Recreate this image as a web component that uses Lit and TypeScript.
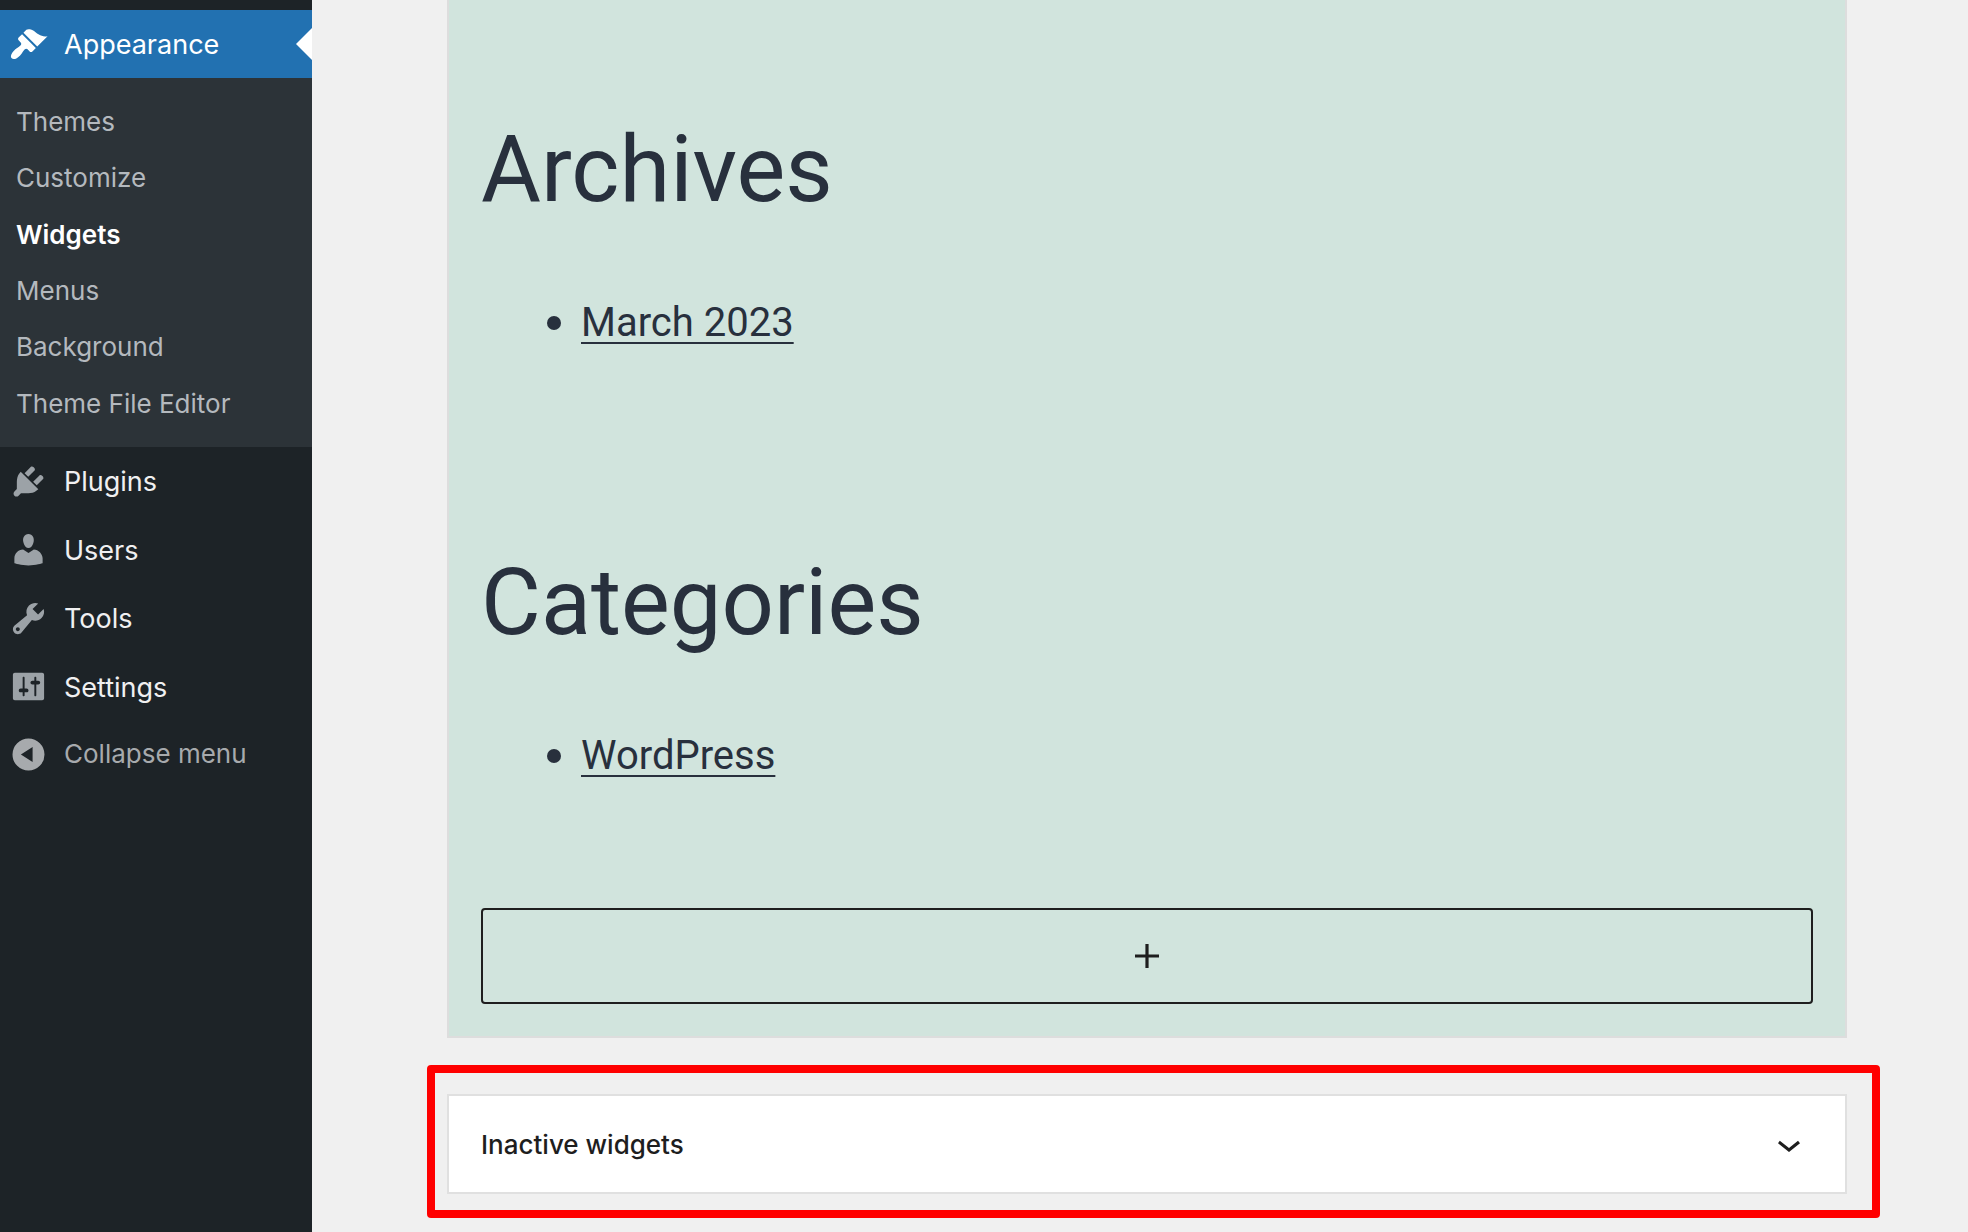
import { LitElement, html, css, svg } from "lit";
import { customElement, property, state } from "lit/decorators.js";
import { classMap } from "lit/directives/class-map.js";

const ICONS = {
  appearance: svg`<path d="M14.48 11.06L7.41 3.99l1.5-1.5c.5-.56 2.3-.47 3.51.32 1.21.8 1.43 1.28 2.91 2.1 1.18.64 2.45 1.26 4.45.85zm-.71.71L6.7 4.7 4.93 6.47c-.39.39-.39 1.02 0 1.41l1.06 1.06c.39.39.39 1.03 0 1.42-.6.6-1.43 1.11-2.21 1.69-.35.26-.7.53-1.01.84C1.43 14.23.4 16.08 1.4 17.07c.99 1 2.84-.03 4.18-1.36.31-.31.58-.66.85-1.02.57-.78 1.08-1.61 1.69-2.21.39-.39 1.02-.39 1.41 0l1.06 1.06c.39.39 1.02.39 1.41 0z"/>`,
  plugins: svg`<path d="M13.11 4.36L9.87 7.6 8 5.73l3.24-3.24c.35-.34 1.05-.2 1.56.32.52.51.66 1.21.31 1.55zm-8 1.77l.91-1.12 9.01 9.01-1.19.84c-.71.71-2.63 1.16-3.82 1.16H6.14L4.9 17.26c-.59.59-1.54.59-2.12 0-.59-.58-.59-1.53 0-2.12l1.24-1.24v-3.88c0-1.13.4-3.19 1.09-3.89zm7.26 3.97l3.24-3.24c.34-.35 1.04-.21 1.55.31.52.51.66 1.21.31 1.55l-3.24 3.25z"/>`,
  users: svg`<path d="M10 9.25c-2.27 0-2.73-3.44-2.73-3.44C7 4.02 7.82 2 9.97 2c2.16 0 2.98 2.02 2.71 3.81 0 0-.41 3.44-2.68 3.44zm0 2.57L12.72 10c2.39 0 4.52 2.33 4.52 4.53v2.49s-3.65 1.13-7.24 1.13c-3.65 0-7.24-1.13-7.24-1.13v-2.49c0-2.25 1.94-4.48 4.47-4.48z"/>`,
  tools: svg`<path d="M16.68 9.77c-1.34 1.34-3.3 1.67-4.95.99l-5.41 6.52c-.99.99-2.59.99-3.58 0s-.99-2.59 0-3.57l6.52-5.42c-.68-1.65-.35-3.61.99-4.95 1.28-1.28 3.12-1.62 4.72-1.06l-2.89 2.89 2.82 2.82 2.86-2.87c.53 1.58.18 3.39-1.08 4.65zM3.81 16.21c.4.39 1.04.39 1.43 0 .4-.4.4-1.04 0-1.43-.39-.4-1.03-.4-1.43 0-.39.39-.39 1.03 0 1.43z"/>`,
  settings: svg`<path d="M18 16V4c0-.55-.45-1-1-1H3c-.55 0-1 .45-1 1v12c0 .55.45 1 1 1h14c.55 0 1-.45 1-1zM8 11h1c.55 0 1 .45 1 1s-.45 1-1 1H8v1.5c0 .28-.22.5-.5.5s-.5-.22-.5-.5V13H6c-.55 0-1-.45-1-1s.45-1 1-1h1V5.5c0-.28.22-.5.5-.5s.5.22.5.5V11zm5-2h-1c-.55 0-1-.45-1-1s.45-1 1-1h1V5.5c0-.28.22-.5.5-.5s.5.22.5.5V7h1c.55 0 1 .45 1 1s-.45 1-1 1h-1v5.5c0 .28-.22.5-.5.5s-.5-.22-.5-.5V9z"/>`,
  collapse: svg`<path fill-rule="evenodd" d="M10 1.8a8.2 8.2 0 1 0 0 16.4 8.2 8.2 0 0 0 0-16.4zM12.1 6.2v7.7L6.1 10z"/>`,
};

type IconName = keyof typeof ICONS;

@customElement("dash-icon")
class DashIcon extends LitElement {
  @property() name: IconName = "appearance";

  static styles = css`
    :host {
      display: block;
      width: 39px;
      height: 39px;
    }
    .glyph {
      display: block;
      width: 100%;
      height: 100%;
      fill: currentColor;
    }
  `;

  render() {
    return html`<svg class="glyph" viewBox="0 0 20 20" aria-hidden="true">${ICONS[this.name]}</svg>`;
  }
}

@customElement("admin-menu")
class AdminMenu extends LitElement {
  private submenu = ["Themes", "Customize", "Widgets", "Menus", "Background", "Theme File Editor"];

  private items: { label: string; icon: IconName }[] = [
    { label: "Plugins", icon: "plugins" },
    { label: "Users", icon: "users" },
    { label: "Tools", icon: "tools" },
    { label: "Settings", icon: "settings" },
  ];

  static styles = css`
    :host {
      display: block;
      background: #1d2327;
      color: #f0f0f1;
      padding-top: 10px;
    }
    .entry {
      display: flex;
      align-items: center;
      gap: 16px;
      box-sizing: border-box;
      width: 100%;
      min-height: 68px;
      padding: 0 9px;
      border: 0;
      background: none;
      color: inherit;
      font: inherit;
      font-size: 27px;
      line-height: 36px;
      text-align: left;
      text-decoration: none;
    }
    .label {
      padding-top: 2px;
    }
    .icon {
      color: #9ca2a7;
    }
    .current {
      position: relative;
      background: #2271b1;
      color: #fff;
    }
    .current .icon {
      color: #fff;
    }
    .current::after {
      content: "";
      position: absolute;
      right: 0;
      top: 18px;
      border: 16px solid transparent;
      border-left: 0;
      border-right-color: #fff;
    }
    .list {
      display: grid;
      grid-auto-rows: 1fr;
      margin: 0;
      padding: 0;
      list-style: none;
    }
    .submenu {
      min-height: 338px;
      padding: 16px 0 15px;
      background: #2c3338;
    }
    .main {
      min-height: 274px;
    }
    .sublink {
      display: flex;
      align-items: center;
      height: 100%;
      padding: 0 16px;
      color: #b4b9be;
      font-size: 26px;
      line-height: 36px;
      text-decoration: none;
    }
    .selected {
      color: #fff;
      font-weight: 600;
    }
    .collapse {
      min-height: 66px;
      color: #a7aaad;
      font-size: 26px;
      cursor: pointer;
    }
    .collapse .icon {
      color: #a7aaad;
    }
  `;

  render() {
    return html`
      <nav aria-label="Main menu">
        <a class="entry current" href="#appearance">
          <dash-icon class="icon" name="appearance"></dash-icon><span class="label">Appearance</span>
        </a>
        <ul class="list submenu">
          ${this.submenu.map(
            (label) => html`<li>
              <a class=${classMap({ sublink: true, selected: label === "Widgets" })} href="#submenu">${label}</a>
            </li>`
          )}
        </ul>
        <ul class="list main">
          ${this.items.map(
            (item) => html`<li>
              <a class="entry" href="#menu">
                <dash-icon class="icon" name=${item.icon}></dash-icon><span class="label">${item.label}</span>
              </a>
            </li>`
          )}
        </ul>
        <button class="entry collapse" type="button">
          <dash-icon class="icon" name="collapse"></dash-icon>Collapse menu
        </button>
      </nav>
    `;
  }
}

@customElement("widget-area")
class WidgetArea extends LitElement {
  private widgets = [
    { title: "Archives", links: ["March 2023"] },
    { title: "Categories", links: ["WordPress"] },
  ];

  static styles = css`
    :host {
      display: block;
      padding: 108px 32px 32px;
      border: 2px solid #dddddd;
      border-top: 0;
      background: #d1e4dd;
      color: #28303d;
      font-family: Roboto, "Liberation Sans", sans-serif;
    }
    .widgets {
      display: grid;
      gap: 184px;
    }
    .title {
      margin: 0 0 57px;
      font-size: 92px;
      font-weight: 400;
      line-height: 124px;
    }
    .links {
      margin: 0;
      padding: 0 0 0 66px;
      list-style: none;
      font-size: 40px;
      line-height: 68px;
    }
    .item {
      display: flex;
      align-items: center;
      gap: 20px;
    }
    .item::before {
      content: "";
      width: 14px;
      height: 14px;
      border-radius: 50%;
      background: currentColor;
    }
    .link {
      color: inherit;
      text-decoration-line: underline;
      text-decoration-thickness: 2px;
      text-underline-offset: 6px;
      text-decoration-skip-ink: none;
    }
    .add {
      display: flex;
      align-items: center;
      justify-content: center;
      box-sizing: border-box;
      width: 100%;
      height: 96px;
      margin-top: 118px;
      padding: 0;
      border: 2px solid #1e1e1e;
      border-radius: 4px;
      background: none;
      color: #1e1e1e;
      cursor: pointer;
    }
    .plus {
      width: 48px;
      height: 48px;
      fill: currentColor;
    }
  `;

  render() {
    return html`
      <div class="widgets">
        ${this.widgets.map(
          (w) => html`<section>
            <h2 class="title">${w.title}</h2>
            <ul class="links">
              ${w.links.map((l) => html`<li class="item"><a class="link" href="#entry">${l}</a></li>`)}
            </ul>
          </section>`
        )}
      </div>
      <button class="add" type="button" aria-label="Add block">
        <svg class="plus" viewBox="0 0 24 24" aria-hidden="true">
          <path d="M18 11.2h-5.2V6h-1.6v5.2H6v1.6h5.2V18h1.6v-5.2H18z" />
        </svg>
      </button>
    `;
  }
}

@customElement("app-root")
class AppRoot extends LitElement {
  @state() private open = false;

  static styles = css`
    :host {
      display: grid;
      grid-template-columns: 312px minmax(0, 1fr);
      min-height: 100vh;
      background: #f0f0f0;
      font-family: Inter, "Liberation Sans", sans-serif;
    }
    .content {
      display: flex;
      flex-direction: column;
      gap: 56px;
      padding: 0 121px 38px 135px;
    }
    .panel {
      position: relative;
    }
    .toggle {
      display: flex;
      align-items: center;
      justify-content: space-between;
      box-sizing: border-box;
      width: 100%;
      min-height: 100px;
      padding: 0 32px;
      border: 2px solid #e0e0e0;
      background: #fff;
      color: #1e1e1e;
      font: inherit;
      font-size: 26px;
      font-weight: 500;
      line-height: 36px;
      cursor: pointer;
    }
    .label {
      padding-top: 2px;
    }
    .chevron {
      width: 48px;
      height: 48px;
      fill: currentColor;
    }
    .marker {
      position: absolute;
      inset: -29px -33px -24px -20px;
      border: 8px solid #ff0000;
      border-radius: 4px;
      pointer-events: none;
    }
  `;

  render() {
    return html`
      <admin-menu></admin-menu>
      <main class="content">
        <widget-area></widget-area>
        <div class="panel">
          <button
            class="toggle"
            type="button"
            aria-expanded=${this.open ? "true" : "false"}
            @click=${() => (this.open = !this.open)}
          >
            <span class="label">Inactive widgets</span>
            <svg class="chevron" viewBox="0 0 24 24" aria-hidden="true">
              <path d="M17.5 11.6L12 16l-5.5-4.4.9-1.2L12 14l4.5-3.6 1 1.2z" />
            </svg>
          </button>
          <div class="marker"></div>
        </div>
      </main>
    `;
  }
}
